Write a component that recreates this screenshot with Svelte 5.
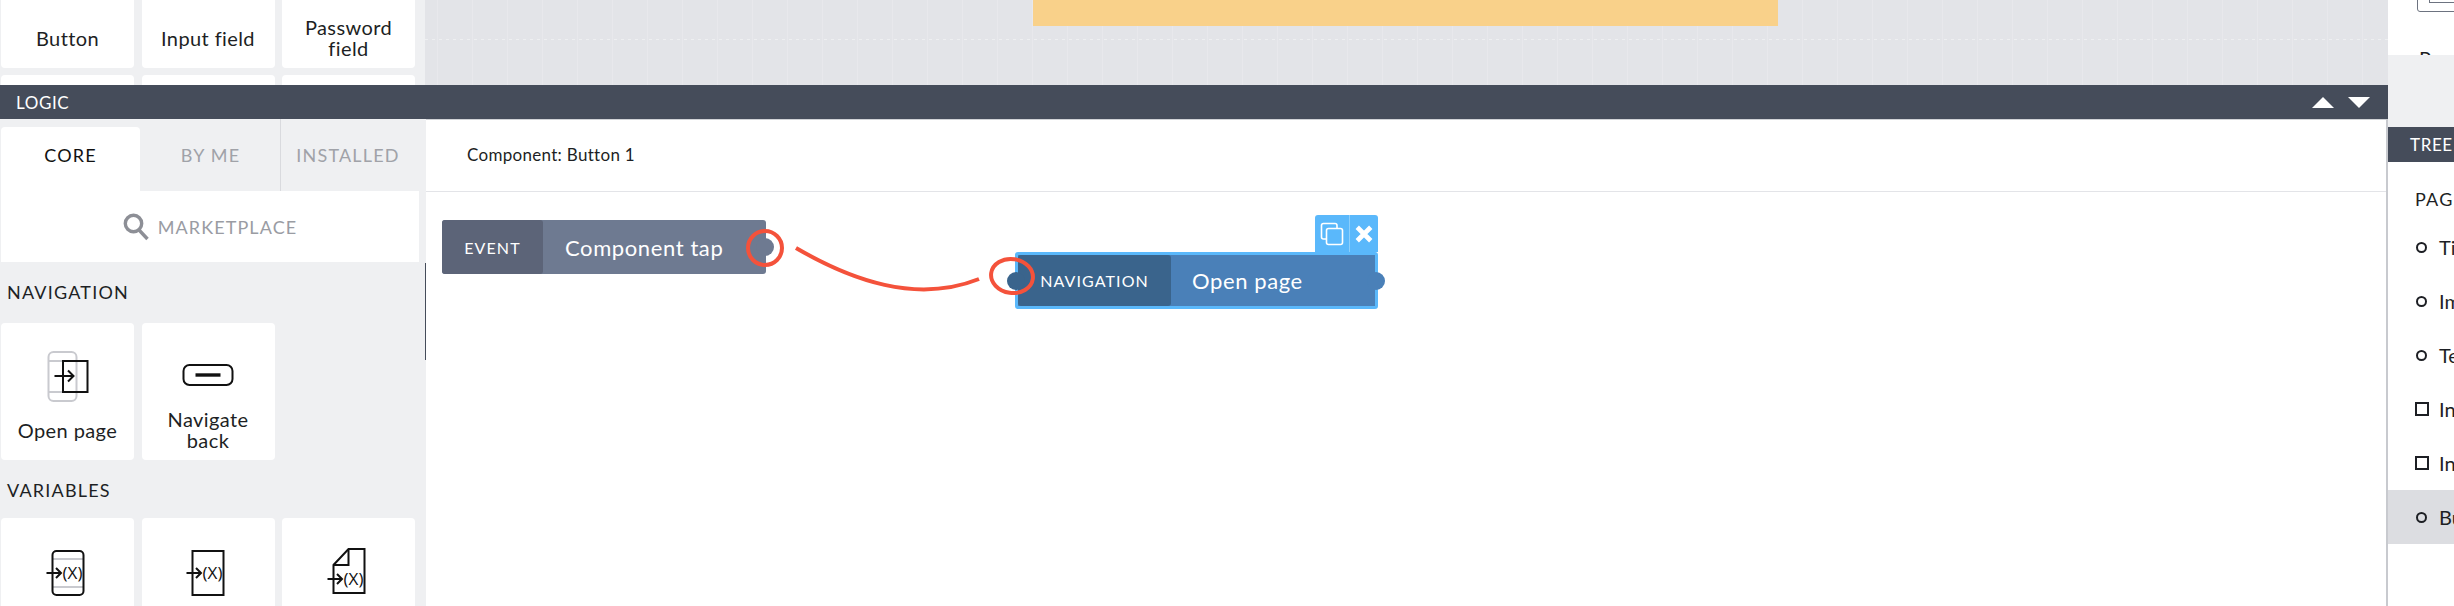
<script lang="ts">
    const topCards = ['Button', 'Input field', 'Password field'];
    const tabs = ['CORE', 'BY ME', 'INSTALLED'];
    const tree = [
        { label: 'Title', shape: 'dot' },
        { label: 'Image', shape: 'dot' },
        { label: 'Text', shape: 'dot' },
        { label: 'Input', shape: 'box' },
        { label: 'Input', shape: 'box' },
        { label: 'Button', shape: 'dot', selected: true }
    ];
</script>

{#snippet varIcon(kind: string)}
    <svg class="icon" width="60" height="60" viewBox="0 0 60 60" fill="none" stroke="#111" stroke-width="2">
        {#if kind === 'doc'}
            <path d="M14.5 52V24L29.5 8H45.5V52Z" />
            <path d="M14.5 24H29.5V8" />
            <path d="M8.5 38H22M18 33L23 38L18 43" />
            <text class="var" x="24.5" y="43.5" textLength="20">(X)</text>
        {:else}
            {#if kind === 'app'}
                <path d="M15 18H45M15 46H45" stroke="#c9cacf" />
                <rect x="14.5" y="10" width="31" height="44" rx="4" />
            {:else}
                <rect x="14.5" y="10" width="31" height="44" />
            {/if}
            <path d="M8.5 32H22M18 27L23 32L18 37" />
            <text class="var" x="24.5" y="37.5" textLength="20">(X)</text>
        {/if}
    </svg>
{/snippet}

<div class="page">
    <div class="work">
        <div class="upper">
            <div class="palette-top">
                {#each topCards as label}
                    <div class="card"><span class="label">{label}</span></div>
                {/each}
                <div class="card"></div>
                <div class="card"></div>
                <div class="card"></div>
            </div>
            <div class="canvas">
                <div class="artboard"></div>
            </div>
        </div>

        <div class="bar">
            <span>LOGIC</span>
            <div class="arrows">
                <svg width="22" height="11" viewBox="0 0 22 11"><path d="M0 11L11 0L22 11Z" fill="#fff" /></svg>
                <svg width="22" height="11" viewBox="0 0 22 11"><path d="M0 0H22L11 11Z" fill="#fff" /></svg>
            </div>
        </div>

        <div class="logic">
            <aside class="side">
                <div class="tabs">
                    {#each tabs as tab, i}
                        <div class="tab" class:active={i === 0} class:split={i === 2}>{tab}</div>
                    {/each}
                </div>
                <div class="market">
                    <svg width="26" height="28" viewBox="0 0 26 28" fill="none" stroke="#8d8f96" stroke-width="3.4">
                        <circle cx="10.5" cy="10.5" r="8.2" />
                        <path d="M16 17L24.5 26" />
                    </svg>
                    <span>MARKETPLACE</span>
                </div>
                <h3 class="nav-title">NAVIGATION</h3>
                <div class="cards">
                    <div class="card">
                        <svg class="icon" width="60" height="60" viewBox="0 0 60 60" fill="none" stroke-width="2">
                            <rect x="10.5" y="6" width="28" height="49" rx="5" stroke="#c9cacf" />
                            <path d="M11 15H38M11 46H38" stroke="#c9cacf" />
                            <rect x="25" y="15" width="24.5" height="31" stroke="#111" fill="none" />
                            <path d="M16.5 30H35M30 24.5L35.5 30L30 35.5" stroke="#111" />
                        </svg>
                        <span class="label">Open page</span>
                    </div>
                    <div class="card">
                        <svg class="icon" width="60" height="60" viewBox="0 0 60 60" fill="none" stroke="#111" stroke-width="2">
                            <rect x="5.5" y="19" width="49" height="20" rx="6" />
                            <path d="M17.5 29H42.5" stroke-width="3.4" />
                        </svg>
                        <span class="label">Navigate back</span>
                    </div>
                </div>
                <h3 class="var-title">VARIABLES</h3>
                <div class="cards">
                    <div class="card">{@render varIcon('app')}</div>
                    <div class="card">{@render varIcon('page')}</div>
                    <div class="card">{@render varIcon('doc')}</div>
                </div>
            </aside>

            <section class="main">
                <header class="main-head">Component: Button 1</header>
                <div class="diagram">
                    <div class="node event">
                        <span class="kind">EVENT</span>
                        <span class="name">Component tap</span>
                        <i class="port out"></i>
                    </div>

                    <div class="node nav">
                        <span class="kind">NAVIGATION</span>
                        <span class="name">Open page</span>
                        <i class="port in"></i>
                        <i class="port out"></i>
                        <div class="tools">
                            <span class="tool copy">
                                <svg width="24" height="24" viewBox="0 0 24 24" fill="none" stroke="#fff" stroke-width="1.6">
                                    <path d="M6 17H3.5C2.5 17 1.5 16 1.5 15V3.5C1.5 2.5 2.5 1.5 3.5 1.5H15C16 1.5 17 2.5 17 3.5V6" />
                                    <rect x="6.5" y="6.5" width="16" height="16" rx="2" />
                                </svg>
                            </span>
                            <span class="tool">
                                <svg width="18" height="18" viewBox="0 0 16 16" fill="none" stroke="#fff" stroke-width="4.2">
                                    <path d="M2 2L14 14M14 2L2 14" />
                                </svg>
                            </span>
                        </div>
                    </div>

                    <svg class="wires" width="1000" height="140" viewBox="0 0 1000 140" fill="none" stroke="#f4523b" stroke-width="4">
                        <circle cx="339" cy="56" r="17" />
                        <path d="M370 56C425 88 490 112 553 87" />
                        <ellipse cx="586" cy="84" rx="21" ry="17" transform="rotate(8 586 84)" />
                    </svg>
                </div>
            </section>
        </div>
    </div>

    <aside class="right">
        <div class="props">
            <div class="prop-box"><i></i></div>
            <div class="prop-name">Properties</div>
        </div>
        <div class="gap"></div>
        <div class="tree-head">TREE</div>
        <div class="tree">
            <div class="tree-title">PAGE</div>
            {#each tree as item}
                <div class="row" class:selected={item.selected}>
                    <i class={item.shape}></i>
                    <span>{item.label}</span>
                </div>
            {/each}
        </div>
    </aside>
</div>

<style>
    :global(body) {
        overflow: hidden;
        background: #fff;
    }

    .page {
        display: flex;
        width: 2454px;
        height: 606px;
        overflow: hidden;
        font-family: Lato, "Open Sans", sans-serif;
        color: #1d1f24;
    }

    .work {
        display: flex;
        flex-direction: column;
        width: 2388px;
        flex: none;
    }

    .upper {
        display: flex;
        height: 85px;
        overflow: hidden;
    }

    .palette-top {
        display: grid;
        grid-template-columns: 133px 133px 133px;
        grid-auto-rows: 137px;
        column-gap: 7.5px;
        row-gap: 7px;
        flex: none;
        box-sizing: border-box;
        width: 425px;
        margin-top: -69px;
        padding-left: 1px;
        background: #eff0f2;
    }

    .card {
        display: flex;
        flex-direction: column;
        align-items: center;
        position: relative;
        height: 137px;
        background: #fff;
        border-radius: 4px;
    }

    .icon {
        margin-top: 23px;
        flex: none;
    }

    .label {
        position: absolute;
        left: 10px;
        right: 10px;
        bottom: 30px;
        transform: translateY(50%);
        text-align: center;
        font-size: 20px;
        line-height: 21px;
        letter-spacing: 0.4px;
    }

    .canvas {
        flex: 1;
        position: relative;
        background-color: #e3e4e8;
        background-image:
            linear-gradient(90deg, rgba(255, 255, 255, 0.16) 1px, transparent 1px),
            repeating-linear-gradient(90deg, rgba(255, 255, 255, 0.4) 0 3px, transparent 3px 7px);
        background-size: 35px 100%, 100% 1px;
        background-position: 12px 0, 0 39px;
        background-repeat: repeat, no-repeat;
    }

    .artboard {
        width: 745px;
        height: 26px;
        margin-left: 608px;
        background: #f9d18a;
    }

    .bar {
        display: flex;
        align-items: center;
        justify-content: space-between;
        height: 34px;
        padding: 0 18px 0 16px;
        background: #454c5a;
        color: #fff;
        font-size: 17px;
        letter-spacing: 0.6px;
    }

    .arrows {
        display: flex;
        gap: 14px;
    }

    .logic {
        display: flex;
        flex: 1;
        min-height: 0;
    }

    .side {
        position: relative;
        flex: none;
        width: 426px;
        background: #eff0f2;
        overflow: hidden;
    }

    .side::after {
        content: '';
        position: absolute;
        top: 144px;
        right: 0;
        width: 1px;
        height: 97px;
        background: #454c5a;
    }

    .tabs {
        display: flex;
        height: 72px;
        align-items: flex-end;
        padding-left: 1px;
        font-size: 18px;
        letter-spacing: 1.2px;
    }

    .tab {
        display: flex;
        align-items: center;
        justify-content: center;
        width: 139px;
        height: 64px;
        box-sizing: border-box;
        padding-bottom: 8px;
        color: #a0a2a8;
    }

    .tab:nth-child(2) {
        padding-left: 2px;
    }

    .tab.active {
        background: #fff;
        color: #111;
        border-radius: 4px 4px 0 0;
    }

    .tab.split {
        width: 145px;
        height: 72px;
        border-left: 1px solid #d9dade;
        padding-bottom: 0;
        padding-right: 10px;
        margin-left: 1px;
    }

    .market {
        display: flex;
        align-items: center;
        justify-content: center;
        gap: 9px;
        box-sizing: border-box;
        width: 418px;
        height: 71px;
        margin-left: 1px;
        background: #fff;
        color: #9a9ca3;
        font-size: 18px;
        letter-spacing: 1.1px;
    }

    h3 {
        margin: 0;
        font-size: 18px;
        font-weight: 400;
        letter-spacing: 1.2px;
        line-height: 22px;
        padding-left: 7px;
    }

    .nav-title {
        padding-top: 19px;
        padding-bottom: 20px;
    }

    .var-title {
        padding-top: 19px;
        padding-bottom: 17px;
    }

    .cards {
        display: grid;
        grid-template-columns: 133px 133px 133px;
        column-gap: 7.5px;
        padding-left: 1px;
    }

    .var {
        fill: #111;
        stroke: none;
        font-size: 17px;
        font-family: "Open Sans", sans-serif;
    }

    .main {
        display: flex;
        flex-direction: column;
        flex: 1;
        border-right: 2px solid #c8cacf;
        border-top: 1px solid #d0d2d6;
        background: #fff;
    }

    .main-head {
        flex: none;
        box-sizing: border-box;
        height: 72px;
        display: flex;
        align-items: center;
        padding: 0 0 2px 41px;
        border-bottom: 1px solid #e3e4e8;
        font-size: 17px;
        letter-spacing: 0.3px;
    }

    .diagram {
        position: relative;
        flex: 1;
    }

    .wires {
        position: absolute;
        left: 0;
        top: 0;
        pointer-events: none;
    }

    .node {
        position: absolute;
        display: flex;
        color: #fff;
        border-radius: 3px;
        box-sizing: border-box;
    }

    .kind {
        display: flex;
        align-items: center;
        justify-content: center;
        border-radius: 3px;
        font-size: 16px;
        letter-spacing: 1.1px;
    }

    .name {
        display: flex;
        align-items: center;
        font-size: 22px;
        letter-spacing: 0.6px;
    }

    .port {
        position: absolute;
        top: 50%;
        width: 18px;
        height: 18px;
        margin-top: -9px;
        border-radius: 50%;
    }

    .event {
        left: 16px;
        top: 28px;
        width: 324px;
        height: 54px;
        background: #6e7a91;
    }

    .event .kind {
        width: 101px;
        background: #5c6478;
    }

    .event .name {
        padding-left: 22px;
    }

    .event .port.out {
        right: -8px;
        background: #6e7a91;
    }

    .nav {
        left: 589px;
        top: 60px;
        width: 363px;
        height: 57px;
        background: #4a80b8;
        border: 3px solid #5ab8fb;
    }

    .nav .kind {
        width: 153px;
        background: #3a648c;
    }

    .nav .name {
        padding-left: 21px;
    }

    .nav .port.in {
        left: -11px;
        background: #3a648c;
    }

    .nav .port.out {
        right: -10px;
        background: #4a80b8;
    }

    .tools {
        position: absolute;
        right: -3px;
        bottom: 100%;
        display: flex;
        width: 63px;
        height: 37px;
        margin-bottom: 3px;
        background: #5ab8fb;
        border-radius: 3px 3px 0 0;
    }

    .tool {
        display: flex;
        align-items: center;
        justify-content: center;
        flex: 1;
    }

    .tool.copy {
        flex: none;
        width: 34px;
        border-right: 1px solid #8ccffc;
    }

    .right {
        display: flex;
        flex-direction: column;
        flex: 1;
        min-width: 0;
        overflow: hidden;
        background: #fff;
        white-space: nowrap;
    }

    .props {
        position: relative;
        height: 55px;
        overflow: hidden;
        margin-left: 7px;
        background: #fff;
    }

    .prop-box {
        position: absolute;
        top: -20px;
        left: 22px;
        width: 120px;
        height: 30px;
        border: 1px solid #6d7380;
        border-radius: 3px;
    }

    .prop-box i {
        position: absolute;
        left: 11px;
        bottom: 8px;
        width: 40px;
        height: 10px;
        border: 1px solid #6d7380;
    }

    .prop-name {
        position: absolute;
        top: 46px;
        left: 24px;
        font-size: 20px;
    }

    .gap {
        height: 72px;
        background: #eff0f2;
    }

    .tree-head {
        display: flex;
        align-items: center;
        height: 35px;
        padding-left: 22px;
        background: #454c5a;
        color: #fff;
        font-size: 17px;
        letter-spacing: 0.6px;
    }

    .tree {
        flex: 1;
    }

    .tree-title {
        padding: 26px 0 0 27px;
        height: 27px;
        margin-bottom: 5px;
        font-size: 18px;
        letter-spacing: 1.2px;
    }

    .row {
        display: flex;
        align-items: center;
        gap: 11px;
        height: 54px;
        padding-left: 28px;
        font-size: 20px;
    }

    .row.selected {
        background: #dcdde1;
    }

    .row i {
        box-sizing: border-box;
        flex: none;
        border: 2px solid #1d1f24;
    }

    .dot {
        width: 11px;
        height: 11px;
        margin: 0 1px 0 0;
        border-radius: 50%;
    }

    .box {
        width: 14px;
        height: 14px;
        margin-left: -1px;
        margin-right: -1px;
    }
</style>
